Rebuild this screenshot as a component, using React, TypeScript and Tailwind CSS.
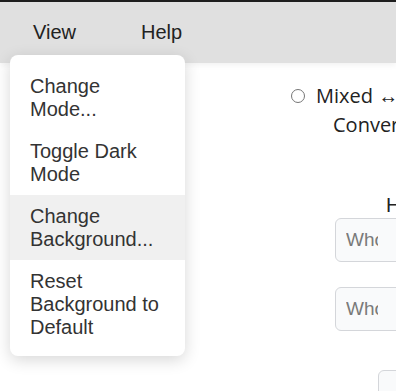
import React from "react";

const menuItems = [
  { label: "Change Mode...", active: false },
  { label: "Toggle Dark Mode", active: false },
  { label: "Change Background...", active: true },
  { label: "Reset Background to Default", active: false },
];

function FakeInput() {
  return (
    <div className="ml-[335px] h-[44px] w-[80px] rounded-[6px] border border-[#d4d6da] bg-[#f9fafb] flex items-center pl-[10px]">
      <span className="block w-[32px] overflow-hidden whitespace-nowrap text-[19px] text-[#7a7a7a]">
        Whole number
      </span>
    </div>
  );
}

export default function App() {
  return (
    <div className="relative w-[396px] h-[391px] overflow-hidden bg-white text-[#222] font-['Liberation_Sans',Arial,sans-serif]">
      {/* top strip */}
      <div className="h-[2px] bg-[#1f1f1f]" />

      {/* menu bar */}
      <div className="relative z-10 h-[61px] bg-[#e0e0e0] flex items-center text-[20px] shadow-[0_2px_6px_rgba(0,0,0,0.06)]">
        <span className="pl-[33px] pb-[1px]">View</span>
        <span className="pl-[65px] pb-[1px]">Help</span>
      </div>

      {/* page content */}
      <div className="flex flex-col">
        <div className="mt-[18px] whitespace-nowrap font-['Open_Sans',sans-serif] text-[20px] leading-[29px]">
          <div className="flex items-center pl-[291px]">
            <span className="shrink-0 inline-block w-[14px] h-[14px] rounded-full border border-[#767676] bg-white mr-[11px]" />
            <span>Mixed ↔ Improper</span>
          </div>
          <div className="pl-[333px]">Converter</div>
        </div>

        <div className="mt-[55px] pl-[386px] text-[20px] leading-[22px] whitespace-nowrap">How many</div>
        <div className="mt-[2px]">
          <FakeInput />
        </div>
        <div className="mt-[25px]">
          <FakeInput />
        </div>
        <div className="mt-[39px] ml-[378px] h-[40px] w-[60px] rounded-[6px] border border-[#d4d6da] bg-[#f9fafb]" />
      </div>

      {/* dropdown */}
      <div className="absolute left-[10px] top-[55px] z-20 w-[175px] rounded-[8px] bg-white pt-[10px] pb-[8px] shadow-[0_4px_16px_rgba(0,0,0,0.16)]">
        {menuItems.map((item) => (
          <div
            key={item.label}
            className={`pl-[20px] pr-[20px] py-[9.5px] text-[20px] leading-[23px] text-[#333] ${
              item.active ? "bg-[#f0f0f0]" : ""
            }`}
          >
            {item.label}
          </div>
        ))}
      </div>
    </div>
  );
}
